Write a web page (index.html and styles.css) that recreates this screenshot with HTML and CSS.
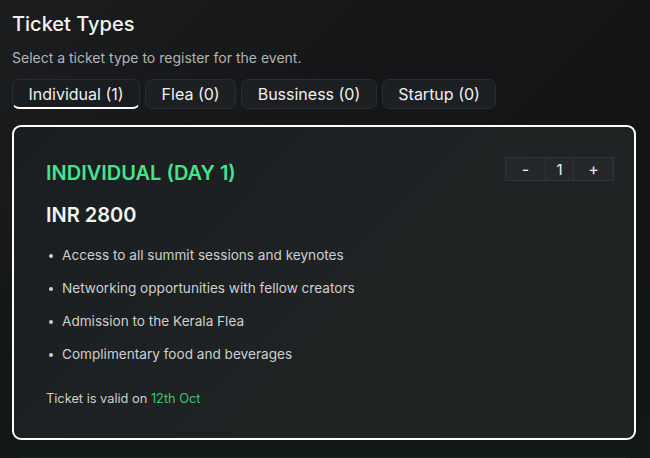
FILE: index.html
```html
<!DOCTYPE html>
<html>
<head>
<meta charset="utf-8">
<link rel="stylesheet" href="styles.css">
</head>
<body>
<main class="page">
  <h1 class="title">Ticket Types</h1>
  <p class="subtitle">Select a ticket type to register for the event.</p>
  <div class="tabs">
    <button class="tab active">Individual (1)</button>
    <button class="tab">Flea (0)</button>
    <button class="tab">Bussiness (0)</button>
    <button class="tab">Startup (0)</button>
  </div>
  <section class="card">
    <div class="card-head">
      <h2 class="ticket-name">INDIVIDUAL (DAY 1)</h2>
      <div class="counter">
        <span class="cbtn">-</span>
        <span class="cval">1</span>
        <span class="cbtn">+</span>
      </div>
    </div>
    <div class="price">INR 2800</div>
    <ul class="features">
      <li>Access to all summit sessions and keynotes</li>
      <li>Networking opportunities with fellow creators</li>
      <li>Admission to the Kerala Flea</li>
      <li>Complimentary food and beverages</li>
    </ul>
    <p class="valid">Ticket is valid on <span class="date">12th Oct</span></p>
  </section>
  <section class="card next"></section>
</main>
</body>
</html>
```

FILE: styles.css
```css
* { box-sizing: border-box; }
html, body {
  margin: 0;
  height: 100%;
}
body {
  background:
    linear-gradient(180deg, rgba(17, 24, 21, 0) 55%, rgba(17, 24, 21, 1) 100%),
    linear-gradient(135deg, #1b1d1f 0%, #141618 40%, #111315 100%);
  font-family: Inter, "Noto Sans", sans-serif;
  color: #f2f2f2;
  overflow: hidden;
}
.page {
  padding: 12px 12px 0 12px;
  display: flex;
  flex-direction: column;
}
.title {
  margin: 0;
  font-size: 20px;
  font-weight: 500;
  line-height: 24px;
  color: #f4f4f4;
}
.subtitle {
  margin: 13px 0 0 0;
  font-size: 14px;
  line-height: 17px;
  color: #b4b4b4;
}
.tabs {
  display: flex;
  gap: 5px;
  margin-top: 13px;
}
.tab {
  font-family: inherit;
  font-size: 16px;
  color: #f0f0f0;
  background: #1d2022;
  border: 1px solid #2a2d30;
  border-radius: 7px;
  height: 30px;
  padding: 0 15.5px;
  line-height: 28px;
}
.tab.active {
  border-bottom: 2px solid #ffffff;
  background: #1a1d1f;
}
.card {
  margin-top: 16px;
  width: 624px;
  height: 315px;
  border: 2px solid #ffffff;
  border-radius: 9px;
  background: linear-gradient(135deg, #1b1e20 0%, #1f2324 60%, #202424 100%);
  padding: 30px 20px 0 32px;
}
.card-head {
  display: flex;
  justify-content: space-between;
  align-items: flex-start;
}
.ticket-name {
  margin: 4px 0 0 0;
  font-size: 20px;
  font-weight: 600;
  line-height: 24px;
  color: #42e58c;
}
.counter {
  display: flex;
  height: 24px;
  background: #25282a;
  border: 1px solid #323537;
  color: #f0f0f0;
}
.cbtn, .cval {
  display: flex;
  align-items: center;
  justify-content: center;
}
.cbtn {
  width: 39px;
  font-size: 16px;
}
.cval {
  width: 29px;
  border-left: 1px solid #323537;
  border-right: 1px solid #323537;
  font-size: 15px;
}
.price {
  margin-top: 18px;
  font-size: 20px;
  font-weight: 600;
  line-height: 24px;
  color: #f4f4f4;
}
.features {
  margin: 20px 0 0 0;
  padding: 0 0 0 16px;
  list-style: none;
}
.features li {
  position: relative;
  font-size: 13.6px;
  line-height: 17px;
  color: #cfcfcf;
  margin-bottom: 16px;
}
.features li::before {
  content: "";
  position: absolute;
  left: -13px;
  top: 7px;
  width: 4px;
  height: 4px;
  border-radius: 50%;
  background: #cfcfcf;
}
.valid {
  margin: 28px 0 0 0;
  font-size: 12.8px;
  line-height: 16px;
  color: #cfcfcf;
}
.date { color: #34c96d; }
.card.next {
  margin-top: 17px;
  border: none;
  background: #1f2a26;
  height: 20px;
  border-radius: 8px;
}
```
